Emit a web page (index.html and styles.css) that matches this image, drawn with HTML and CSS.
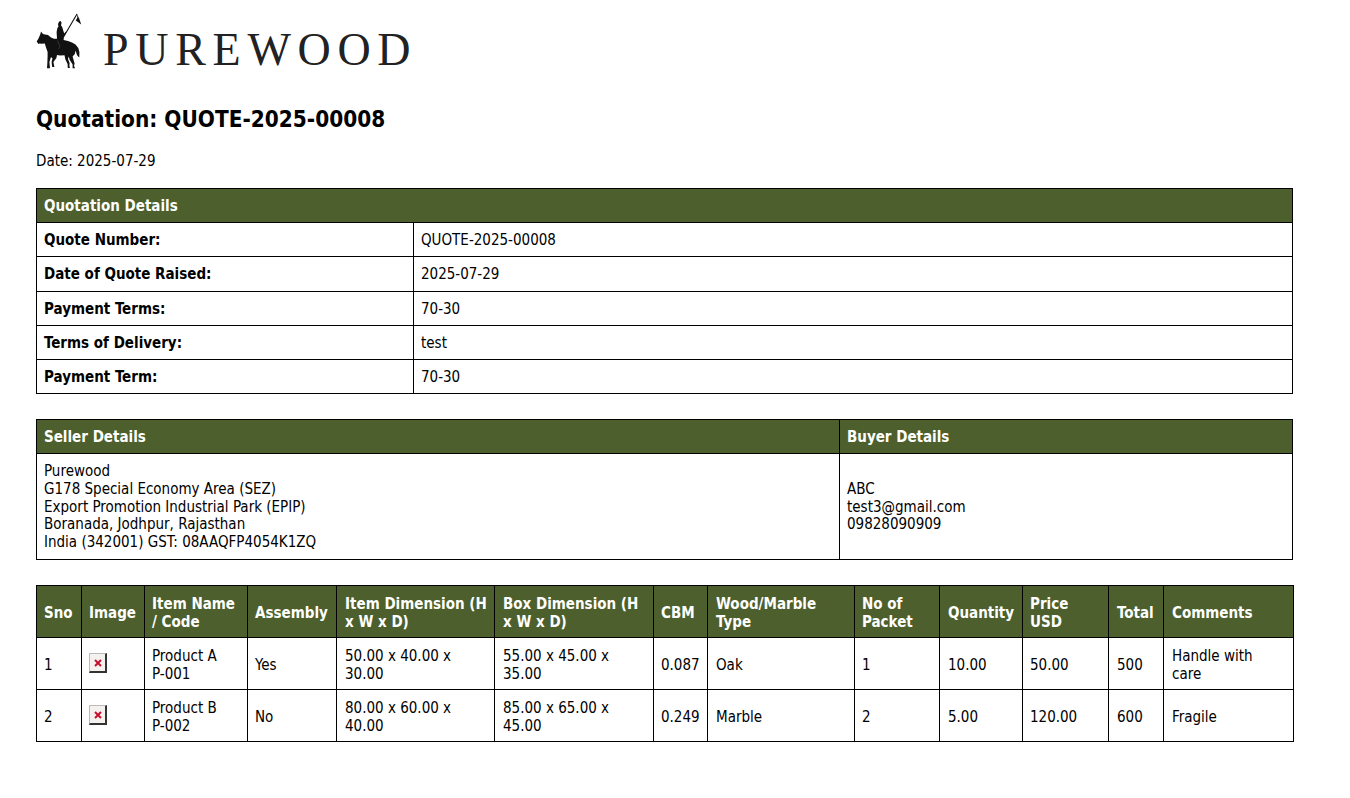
FILE: index.html
```html
<!DOCTYPE html>
<html lang="en">
<head>
<meta charset="utf-8">
<title>Quotation: QUOTE-2025-00008</title>
<link rel="stylesheet" href="styles.css">
</head>
<body>
<main class="page">
  <header class="logo">
    <svg class="logo-mark" viewBox="36 10 46 60" aria-hidden="true">
      <path class="mark-fill" d="M41 29.5 L43 32 L45 32.5 L48 33 L51 35.5 L54 36.8 L57 36.8 L56.6 30 L57.4 26 L58.4 24.8 L58 22 L59.2 19.5 L60.6 19 L61.6 20.8 L61 23.2 L62.2 25 L63.4 29 L64.2 31.5 L66 29.5 L66.4 30.4 L64 34.5 L63.6 38 L68 39 L72 40.4 L75.5 42.5 L78.3 46 L79.4 50 L79.3 55.5 L77.6 54 L76.8 52.4 L75.6 48.5 L74.8 52 L72.6 54.5 L73.6 58 L74.6 61.5 L74 64 L75.2 66.2 L72.6 66.2 L72.6 62.5 L69.6 57.8 L68.8 54.5 L68 57 L69.6 61 L69.4 64 L70 66 L67.8 66 L67.6 62 L65.4 57.5 L64.5 53.2 L60 53.5 L57 53 L56.4 56 L53.4 60 L54.4 65 L52.2 65 L51.6 60 L52.5 56.5 L51 55 L49.4 60 L50 66.2 L47 66.2 L47.4 60 L47.6 54 L47.6 50 L46 45.5 L44.8 41.6 L41.6 41.8 L39.6 41.4 L38.4 42 L36.7 39.6 L38.5 36.5 L39.6 34 L40.4 32 Z"/>
      <path class="mark-line" d="M63.5 35 L77 12"/>
      <path class="mark-fill" d="M76.6 11.6 L79.2 16.5 L81.2 22.6 L78.6 20.6 L75.8 18.4 L77.4 15.6 Z"/>
      <path class="mark-gap" d="M57.4 38.5 L60 44.5 L58.4 47"/>
    </svg>
    <span class="wordmark">PUREWOOD</span>
  </header>

  <h1 class="title">Quotation: QUOTE-2025-00008</h1>
  <p class="date">Date: 2025-07-29</p>

  <table class="sheet details">
    <colgroup><col class="c-label"><col></colgroup>
    <thead><tr><th colspan="2">Quotation Details</th></tr></thead>
    <tbody>
      <tr><th class="label">Quote Number:</th><td>QUOTE-2025-00008</td></tr>
      <tr><th class="label">Date of Quote Raised:</th><td>2025-07-29</td></tr>
      <tr><th class="label">Payment Terms:</th><td>70-30</td></tr>
      <tr><th class="label">Terms of Delivery:</th><td>test</td></tr>
      <tr><th class="label">Payment Term:</th><td>70-30</td></tr>
    </tbody>
  </table>

  <table class="sheet parties">
    <colgroup><col class="c-seller"><col></colgroup>
    <thead><tr><th>Seller Details</th><th>Buyer Details</th></tr></thead>
    <tbody>
      <tr>
        <td>Purewood<br>G178 Special Economy Area (SEZ)<br>Export Promotion Industrial Park (EPIP)<br>Boranada, Jodhpur, Rajasthan<br>India (342001) GST: 08AAQFP4054K1ZQ</td>
        <td>ABC<br>test3@gmail.com<br>09828090909</td>
      </tr>
    </tbody>
  </table>

  <table class="sheet items">
    <colgroup>
      <col class="i1"><col class="i2"><col class="i3"><col class="i4"><col class="i5"><col class="i6"><col class="i7"><col class="i8"><col class="i9"><col class="i10"><col class="i11"><col class="i12"><col class="i13">
    </colgroup>
    <thead>
      <tr>
        <th>Sno</th><th>Image</th><th>Item Name / Code</th><th>Assembly</th><th class="nudge">Item Dimension (H x W x D)</th><th class="nudge">Box Dimension (H x W x D)</th><th>CBM</th><th class="nudge">Wood/Marble Type</th><th>No of Packet</th><th class="nudge">Quantity</th><th>Price USD</th><th class="nudge">Total</th><th class="nudge">Comments</th>
      </tr>
    </thead>
    <tbody>
      <tr>
        <td>1</td>
        <td class="pic"><span class="broken"><svg viewBox="0 0 8 8" aria-hidden="true"><path d="M1 1 L7 7 M7 1 L1 7"/></svg></span></td>
        <td>Product A<br>P-001</td><td>Yes</td><td class="nudge">50.00 x 40.00 x 30.00</td><td class="nudge">55.00 x 45.00 x 35.00</td><td>0.087</td><td class="nudge">Oak</td><td>1</td><td class="nudge">10.00</td><td>50.00</td><td class="nudge">500</td><td class="nudge note">Handle with care</td>
      </tr>
      <tr>
        <td>2</td>
        <td class="pic"><span class="broken"><svg viewBox="0 0 8 8" aria-hidden="true"><path d="M1 1 L7 7 M7 1 L1 7"/></svg></span></td>
        <td>Product B<br>P-002</td><td>No</td><td class="nudge">80.00 x 60.00 x 40.00</td><td class="nudge">85.00 x 65.00 x 45.00</td><td>0.249</td><td class="nudge">Marble</td><td>2</td><td class="nudge">5.00</td><td>120.00</td><td class="nudge">600</td><td class="nudge note">Fragile</td>
      </tr>
    </tbody>
  </table>
</main>
</body>
</html>
```
FILE: styles.css
```css
* { box-sizing: border-box; }
html, body { margin: 0; padding: 0; background: #fff; }
body {
  font-family: "DejaVu Sans Condensed", "DejaVu Sans", sans-serif;
  font-size: 15px;
  line-height: 17px;
  color: #000;
}
.page { width: 1293px; padding: 10px 0 0 36px; }

.logo { display: flex; align-items: flex-end; height: 62px; gap: 21px; }
.logo-mark { width: 46px; height: 60px; display: block; flex: none; }
.mark-fill { fill: #111; }
.mark-line { stroke: #111; stroke-width: 1.1; fill: none; }
.mark-gap { stroke: #555; stroke-width: 0.5; fill: none; }
.wordmark {
  font-family: "Liberation Serif", serif;
  font-size: 46px;
  line-height: 46px;
  letter-spacing: 6.7px;
  color: #222;
  margin-bottom: -1px;
}

.title { margin: 33px 0 0; font-size: 22.4px; line-height: 29px; font-weight: 700; }
.date { margin: 18px 0 0; line-height: 18px; }

.sheet { width: 1257px; table-layout: fixed; border-collapse: collapse; }
.sheet th, .sheet td {
  border: 1px solid #000;
  padding: 9px 7px 7px;
  text-align: left;
  vertical-align: middle;
}
.sheet thead th { background: #4c5f2c; color: #fff; font-weight: 700; }
.sheet .label { background: #fff; color: #000; font-weight: 700; }

.details { margin-top: 18px; line-height: 17.2px; }
.c-label { width: 377px; }
.parties { margin-top: 25px; }
.parties td { line-height: 17.7px; }
.c-seller { width: 803px; }
.items { margin-top: 25px; line-height: 18px; }
.sheet.items th, .sheet.items td { padding-top: 9.5px; padding-bottom: 5.5px; }
.sheet.items .nudge { padding-left: 8px; }
.sheet.items .note { padding-right: 12px; }
.sheet.items .pic { padding-top: 7px; padding-bottom: 8px; }

.i1 { width: 45px; }
.i2 { width: 63px; }
.i3 { width: 103px; }
.i4 { width: 89px; }
.i5 { width: 158px; }
.i6 { width: 159px; }
.i7 { width: 54px; }
.i8 { width: 147px; }
.i9 { width: 85px; }
.i10 { width: 83px; }
.i11 { width: 86px; }
.i12 { width: 55px; }
.i13 { width: 130px; }

.broken {
  display: block;
  width: 18px;
  height: 20px;
  background: #f4f1ee;
  border: 1px solid #bbb;
  border-right: 2px solid #333;
  border-bottom: 2px solid #333;
  padding: 5px 4px;
}
.broken svg { display: block; width: 8px; height: 8px; }
.broken path { stroke: #c8102e; stroke-width: 2; fill: none; }
```
